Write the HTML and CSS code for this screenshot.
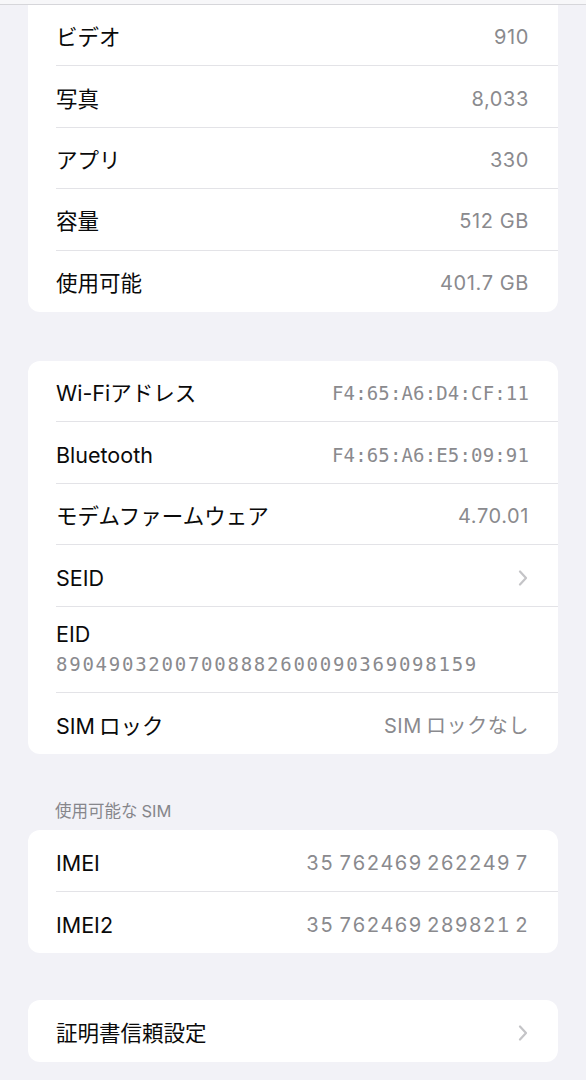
FILE: index.html
```html
<!DOCTYPE html>
<html lang="ja">
<head>
    <meta charset="UTF-8">
    <meta name="viewport" content="width=device-width, initial-scale=1.0">
    <title>情報</title>
    <link rel="stylesheet" href="styles.css">
</head>
<body>
    <div class="topbar"></div>
    <main class="page">
        <section class="group group-first">
            <div class="row"><span class="label">ビデオ</span><span class="value">910</span></div>
            <div class="row"><span class="label">写真</span><span class="value">8,033</span></div>
            <div class="row"><span class="label">アプリ</span><span class="value">330</span></div>
            <div class="row"><span class="label">容量</span><span class="value">512 GB</span></div>
            <div class="row"><span class="label">使用可能</span><span class="value">401.7 GB</span></div>
        </section>

        <section class="group">
            <div class="row"><span class="label">Wi-Fiアドレス</span><span class="value mono">F4:65:A6:D4:CF:11</span></div>
            <div class="row"><span class="label">Bluetooth</span><span class="value mono">F4:65:A6:E5:09:91</span></div>
            <div class="row"><span class="label">モデムファームウェア</span><span class="value">4.70.01</span></div>
            <div class="row"><span class="label">SEID</span>
                <svg class="chevron" width="10" height="16" viewBox="0 0 10 16"><path d="M2 1.5 L8 8 L2 14.5" /></svg>
            </div>
            <div class="row row-stacked">
                <span class="label">EID</span>
                <span class="value eid">89049032007008882600090369098159</span>
            </div>
            <div class="row"><span class="label">SIM<span class="gap"></span>ロック</span><span class="value">SIM<span class="gap"></span>ロックなし</span></div>
        </section>

        <h2 class="group-title">使用可能な<span class="gap"></span>SIM</h2>
        <section class="group group-titled">
            <div class="row"><span class="label">IMEI</span><span class="value imei">35 762469 262249 7</span></div>
            <div class="row"><span class="label">IMEI2</span><span class="value imei">35 762469 289821 2</span></div>
        </section>

        <section class="group">
            <div class="row"><span class="label">証明書信頼設定</span>
                <svg class="chevron" width="10" height="16" viewBox="0 0 10 16"><path d="M2 1.5 L8 8 L2 14.5" /></svg>
            </div>
        </section>
    </main>
</body>
</html>
```

FILE: styles.css
```css
/* Grundlayout */
body {
    margin: 0;
    background: #f2f2f7;
    font-family: 'Inter', 'Noto Sans CJK JP', sans-serif;
    color: #0a0a0a;
}

.topbar {
    height: 4px;
    background: #f7f7f9;
    border-bottom: 1px solid #d6d6da;
}

.page {
    padding: 0 28px 40px 28px;
}

/* Gruppen */
.group {
    background: #fff;
    border-radius: 12px;
    margin-top: 49px;
}

.group-first {
    margin-top: 0;
    border-radius: 0 0 12px 12px;
}

.group-titled {
    margin-top: 0;
}

.group:last-child {
    margin-top: 47px;
}

.group-title {
    margin: 46px 0 8px 27px;
    font-size: 16.5px;
    font-weight: 400;
    line-height: 22px;
    color: #86868b;
}

/* kleiner Abstand zwischen lateinisch und japanisch */
.gap {
    display: inline-block;
    width: 4px;
}

/* Zeilen */
.row {
    display: flex;
    justify-content: space-between;
    align-items: center;
    box-sizing: border-box;
    height: 61.5px;
    margin-left: 28px;
    padding-right: 29px;
    padding-top: 4px;
    border-bottom: 1px solid #e3e3e7;
}

.row:last-child {
    border-bottom: none;
}

.group-first .row {
    height: 61.4px;
}

.row-stacked {
    flex-direction: column;
    align-items: flex-start;
    justify-content: flex-start;
    height: 86px;
    padding-top: 14px;
    gap: 5px;
}

.label {
    font-size: 21.5px;
    line-height: 26px;
}

.value {
    font-size: 20px;
    line-height: 26px;
    color: #8a8a8e;
    letter-spacing: 0.6px;
}

.mono {
    font-family: 'DejaVu Sans Mono', monospace;
    font-size: 19px;
    letter-spacing: 0.15px;
}

.eid {
    font-family: 'DejaVu Sans Mono', monospace;
    font-size: 19px;
    line-height: 24px;
    letter-spacing: 1.75px;
}

.imei {
    font-feature-settings: "tnum";
    letter-spacing: 1px;
    word-spacing: -2px;
}

.chevron path {
    fill: none;
    stroke: #c4c4c7;
    stroke-width: 2.2;
    stroke-linecap: round;
    stroke-linejoin: round;
}

.chevron {
    margin-right: 1px;
}
```
